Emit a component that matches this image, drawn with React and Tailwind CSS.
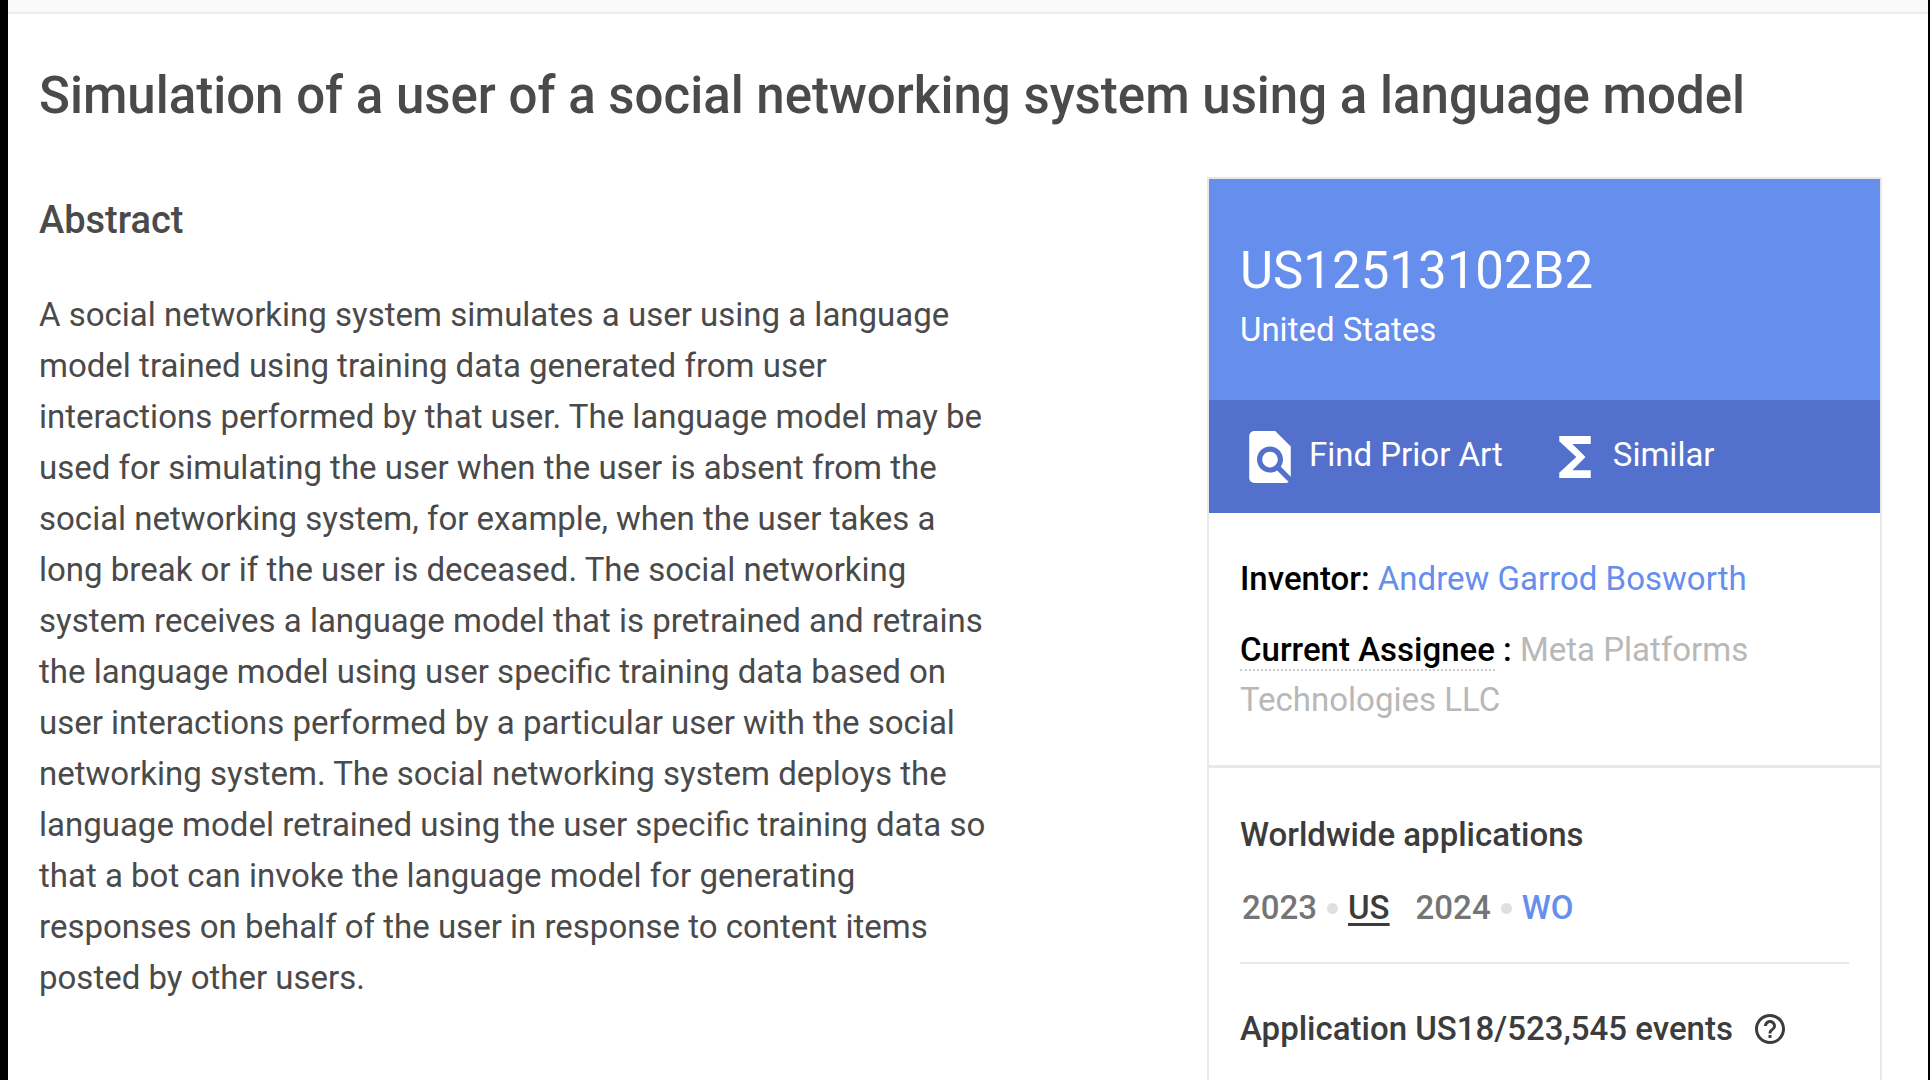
const patent = {
  title: 'Simulation of a user of a social networking system using a language model',
  number: 'US12513102B2',
  country: 'United States',
  inventor: 'Andrew Garrod Bosworth',
  assignee: 'Meta Platforms Technologies LLC',
  application: 'US18/523,545',
  abstract:
    'A social networking system simulates a user using a language model trained using training data generated from user interactions performed by that user. The language model may be used for simulating the user when the user is absent from the social networking system, for example, when the user takes a long break or if the user is deceased. The social networking system receives a language model that is pretrained and retrains the language model using user specific training data based on user interactions performed by a particular user with the social networking system. The social networking system deploys the language model retrained using the user specific training data so that a bot can invoke the language model for generating responses on behalf of the user in response to content items posted by other users.'
};

const applications = [
  { year: '2023', code: 'US', current: true },
  { year: '2024', code: 'WO', current: false }
];

const FindInPageIcon = () => (
  <svg viewBox="4 2 16 20" className="h-[52px] w-[42px] shrink-0" fill="currentColor" aria-hidden="true">
    <path d="M20 19.59V8l-6-6H6c-1.1 0-1.99.9-1.99 2L4 20c0 1.1.89 2 1.99 2H18c.45 0 .85-.15 1.19-.4l-4.43-4.43c-.8.52-1.74.83-2.76.83-2.76 0-5-2.24-5-5s2.24-5 5-5 5 2.24 5 5c0 1.02-.31 1.96-.83 2.75L20 19.59zM9 13c0 1.66 1.34 3 3 3s3-1.34 3-3-1.34-3-3-3-3 1.34-3 3z" />
  </svg>
);

const SigmaIcon = () => (
  <svg viewBox="6 4 12 16" className="h-[42px] w-10 shrink-0" fill="currentColor" aria-hidden="true">
    <path d="M18 4H6v2l6.5 6L6 18v2h12v-3h-7l5-5-5-5h7z" />
  </svg>
);

const HelpIcon = () => (
  <svg viewBox="2 2 20 20" className="h-[30px] w-[30px]" fill="currentColor" aria-hidden="true">
    <path d="M11 18h2v-2h-2v2zm1-16C6.48 2 2 6.48 2 12s4.48 10 10 10 10-4.48 10-10S17.52 2 12 2zm0 18c-4.41 0-8-3.59-8-8s3.59-8 8-8 8 3.59 8 8-3.59 8-8 8zm0-14c-2.21 0-4 1.79-4 4h2c0-1.1.9-2 2-2s2 .9 2 2c0 2-3 1.75-3 5h2c0-2.25 3-2.5 3-5 0-2.21-1.79-4-4-4z" />
  </svg>
);

const ActionButton = ({ icon: Icon, label }) => (
  <button type="button" className="flex items-center gap-[18px]">
    <Icon />
    <span className="pb-1">{label}</span>
  </button>
);

const KnowledgeCard = () => (
  <aside className="w-[675px] shrink-0 border-2 border-b-0 border-[#e8e8e8] text-[33px] leading-[50px]">
    <header className="bg-[#668eec] px-[31px] pt-[58px] pb-[45px] text-white">
      <h2 className="text-[51px] leading-[68px]">{patent.number}</h2>
      <p>{patent.country}</p>
    </header>
    <div className="flex items-center gap-[52px] bg-[#5370cd] px-10 pt-[30px] pb-[29px] text-white">
      <ActionButton icon={FindInPageIcon} label="Find Prior Art" />
      <ActionButton icon={SigmaIcon} label="Similar" />
    </div>

    {/* People */}
    <dl className="space-y-[21px] border-b-3 border-[#e8e8e8] px-[31px] pt-[41px] pb-10">
      <div>
        <dt className="inline font-medium text-black">Inventor:</dt>{' '}
        <dd className="inline">
          <a href="#inventor" className="text-[#668eec]">{patent.inventor}</a>
        </dd>
      </div>
      <div>
        <dt className="inline font-medium text-black">
          <span className="border-b-2 border-dotted border-[#cccccc]">Current Assignee</span> <span>:</span>
        </dt>{' '}
        <dd className="inline text-[#b8b8b8]">{patent.assignee}</dd>
      </div>
    </dl>

    {/* Applications */}
    <section className="px-[31px] pt-[42px] pb-20 text-[#3c3c3c]">
      <h3 className="font-medium">Worldwide applications</h3>
      <ul className="mt-[23px] flex gap-[26px] border-b-2 border-[#e8e8e8] pb-[29px] pl-[2px]">
        {applications.map((app) => (
          <li key={app.year} className="flex items-center">
            <span className="font-medium text-[#757575]">{app.year}</span>
            <span className="mx-[10px] h-[11px] w-[11px] rounded-full bg-[#e0e0e0]" />
            <a
              href={`#${app.code}`}
              className={app.current ? 'font-medium underline decoration-3 underline-offset-4' : 'font-medium text-[#668eec]'}
            >
              {app.code}
            </a>
          </li>
        ))}
      </ul>
      <div className="mt-10 flex items-center gap-[22px]">
        <h3 className="font-medium">Application {patent.application} events</h3>
        <button type="button" aria-label="Help">
          <HelpIcon />
        </button>
      </div>
    </section>
  </aside>
);

const App = () => (
  <div className="flex h-screen flex-col overflow-hidden border-r-2 border-l-8 border-black bg-white font-[Roboto,sans-serif] text-[#4a4a4a]">
    <div className="h-[14px] shrink-0 border-b-2 border-[#ececec] bg-[#fafafa]" />
    <main className="pr-[46px] pl-[31px]">
      <h1 className="mt-[50px] text-[51px] leading-[64px] font-medium">{patent.title}</h1>
      <div className="mt-[49px] flex items-start justify-between">
        <section className="max-w-[950px]">
          <h2 className="mt-[19px] text-[38px] leading-[48px] font-medium">Abstract</h2>
          <p className="mt-[45px] text-[33px] leading-[51px]">{patent.abstract}</p>
        </section>
        <KnowledgeCard />
      </div>
    </main>
  </div>
);

export default App;
